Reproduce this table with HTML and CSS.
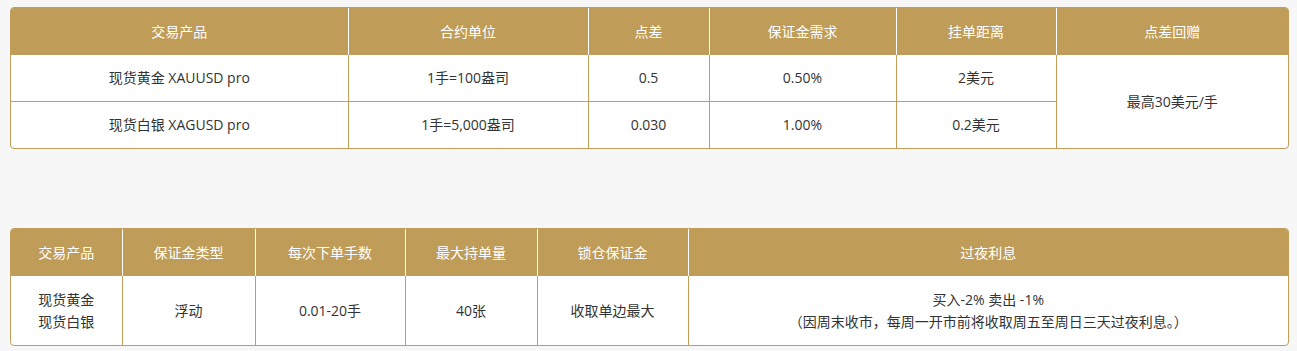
FILE: index.html
```html
<!DOCTYPE html>
<html lang="zh-CN">
<head>
<meta charset="utf-8">
<link rel="stylesheet" href="styles.css">
</head>
<body>
<div class="page">
  <div class="box">
    <table class="grid">
      <colgroup>
        <col class="c337"><col class="c240"><col class="c121"><col class="c187"><col class="c160"><col>
      </colgroup>
      <thead>
        <tr><th>交易产品</th><th>合约单位</th><th>点差</th><th>保证金需求</th><th>挂单距离</th><th class="end">点差回赠</th></tr>
      </thead>
      <tbody>
        <tr><td>现货黄金 XAUUSD pro</td><td>1手=100盎司</td><td>0.5</td><td>0.50%</td><td>2美元</td><td class="end last" rowspan="2">最高30美元/手</td></tr>
        <tr class="last"><td>现货白银 XAGUSD pro</td><td>1手=5,000盎司</td><td>0.030</td><td>1.00%</td><td>0.2美元</td></tr>
      </tbody>
    </table>
  </div>

  <div class="box box2">
    <table class="grid">
      <colgroup>
        <col class="c111"><col class="c133"><col class="c150"><col class="c132"><col class="c151"><col>
      </colgroup>
      <thead>
        <tr><th>交易产品</th><th>保证金类型</th><th>每次下单手数</th><th>最大持单量</th><th>锁仓保证金</th><th class="end">过夜利息</th></tr>
      </thead>
      <tbody>
        <tr class="tall last"><td>现货黄金<br>现货白银</td><td>浮动</td><td>0.01-20手</td><td>40张</td><td>收取单边最大</td><td class="end">买入-2% 卖出 -1%<br>（因周末收市，每周一开市前将收取周五至周日三天过夜利息。）</td></tr>
      </tbody>
    </table>
  </div>
</div>
</body>
</html>
```

FILE: styles.css
```css
html, body {
  margin: 0;
  padding: 0;
  background: #f7f7f7;
}
.page {
  padding: 7px 8px 0 10px;
  font-family: "Open Sans", "Noto Sans CJK SC", sans-serif;
  font-size: 14px;
  color: #333;
}
.box {
  border: 1px solid #c19d59;
  border-radius: 4px;
  overflow: hidden;
  background: #fff;
}
.box2 {
  margin-top: 79px;
}
.grid {
  width: 100%;
  border-collapse: collapse;
  table-layout: fixed;
}
.grid th, .grid td {
  text-align: center;
  vertical-align: middle;
  padding: 0 4px;
  line-height: 22px;
}
.grid th {
  background: #bf9c57;
  color: #fff;
  font-weight: normal;
  height: 47px;
  border-right: 1px solid #fff;
}
.grid td {
  height: 46px;
  border-right: 1px solid #c19d59;
  border-bottom: 1px solid #c19d59;
}
.grid th.end, .grid td.end {
  border-right: none;
}
.grid tr.last td, .grid td.last {
  border-bottom: none;
}
.grid tr.tall td {
  height: 69px;
}
.c337 { width: 337px; }
.c240 { width: 240px; }
.c121 { width: 121px; }
.c187 { width: 187px; }
.c160 { width: 160px; }
.c111 { width: 111px; }
.c133 { width: 133px; }
.c150 { width: 150px; }
.c132 { width: 132px; }
.c151 { width: 151px; }
```
